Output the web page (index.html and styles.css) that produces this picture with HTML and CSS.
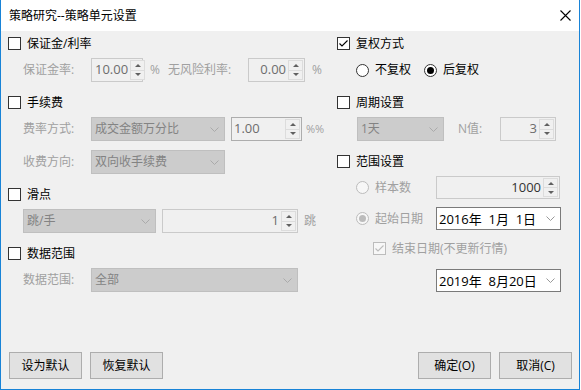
FILE: index.html
```html
<!DOCTYPE html>
<html lang="zh-CN">
<head>
    <meta charset="UTF-8">
    <title>策略研究--策略单元设置</title>
    <link rel="stylesheet" href="styles.css">
</head>
<body>
<div class="window">
    <!-- Title bar -->
    <div class="titlebar">
        <span class="title">策略研究--策略单元设置</span>
        <svg class="close" width="11" height="11" viewBox="0 0 11 11">
            <path d="M0.5 0.5 L10.5 10.5 M10.5 0.5 L0.5 10.5" stroke="#000" stroke-width="1.1" fill="none"/>
        </svg>
    </div>

    <div class="content">
        <div class="columns">
            <!-- Left column -->
            <div class="col col-left">
                <div class="group-head first"><span class="cb"></span>保证金/利率</div>
                <div class="row">
                    <span class="field-label">保证金率:</span>
                    <div class="spin w52"><span class="val">10.00</span><span class="arrows"><i class="up"></i><i class="down"></i></span></div>
                    <span class="unit">%</span>
                    <span class="field-label w80">无风险利率:</span>
                    <div class="spin w57"><span class="val">0.00</span><span class="arrows"><i class="up"></i><i class="down"></i></span></div>
                    <span class="unit">%</span>
                </div>

                <div class="group-head"><span class="cb"></span>手续费</div>
                <div class="row">
                    <span class="field-label">费率方式:</span>
                    <div class="combo w134"><span>成交金额万分比</span><svg class="chev" width="9" height="5" viewBox="0 0 9 5"><path d="M0.5 0.5 L4.5 4.5 L8.5 0.5" stroke="#aaa" fill="none"/></svg></div>
                    <div class="spin w71 dark-border gap6"><span class="val left">1.00</span><span class="arrows"><i class="up"></i><i class="down"></i></span></div>
                    <span class="unit small">%%</span>
                </div>
                <div class="row gap9">
                    <span class="field-label">收费方向:</span>
                    <div class="combo w134"><span>双向收手续费</span><svg class="chev" width="9" height="5" viewBox="0 0 9 5"><path d="M0.5 0.5 L4.5 4.5 L8.5 0.5" stroke="#aaa" fill="none"/></svg></div>
                </div>

                <div class="group-head"><span class="cb"></span>滑点</div>
                <div class="row">
                    <div class="combo w133 indent"><span>跳/手</span><svg class="chev" width="9" height="5" viewBox="0 0 9 5"><path d="M0.5 0.5 L4.5 4.5 L8.5 0.5" stroke="#aaa" fill="none"/></svg></div>
                    <div class="spin w136 gap6"><span class="val">1</span><span class="arrows"><i class="up"></i><i class="down"></i></span></div>
                    <span class="unit tick">跳</span>
                </div>

                <div class="group-head"><span class="cb"></span>数据范围</div>
                <div class="row">
                    <span class="field-label">数据范围:</span>
                    <div class="combo w207"><span>全部</span><svg class="chev" width="9" height="5" viewBox="0 0 9 5"><path d="M0.5 0.5 L4.5 4.5 L8.5 0.5" stroke="#aaa" fill="none"/></svg></div>
                </div>
            </div>

            <!-- Right column -->
            <div class="col col-right">
                <div class="group-head first">
                    <span class="cb"><svg width="11" height="11" viewBox="0 0 11 11"><path d="M1.5 5.5 L4 8 L9.5 2.5" stroke="#000" stroke-width="1.1" fill="none"/></svg></span>复权方式
                </div>
                <div class="row">
                    <span class="radio indent-r"></span><span class="radio-label">不复权</span>
                    <span class="radio on second"></span><span class="radio-label">后复权</span>
                </div>

                <div class="group-head"><span class="cb"></span>周期设置</div>
                <div class="row">
                    <div class="combo w87 indent-c"><span>1天</span><svg class="chev" width="9" height="5" viewBox="0 0 9 5"><path d="M0.5 0.5 L4.5 4.5 L8.5 0.5" stroke="#aaa" fill="none"/></svg></div>
                    <span class="field-label n-label">N值:</span>
                    <div class="spin w56"><span class="val">3</span><span class="arrows"><i class="up"></i><i class="down"></i></span></div>
                </div>

                <div class="group-head"><span class="cb"></span>范围设置</div>
                <div class="row h23">
                    <span class="radio off indent-r"></span><span class="radio-label dim w61">样本数</span>
                    <div class="spin w124 h23"><span class="val black">1000</span><span class="arrows"><i class="up"></i><i class="down"></i></span></div>
                </div>
                <div class="row h23">
                    <span class="radio off on indent-r"></span><span class="radio-label dim w61">起始日期</span>
                    <div class="date"><span class="date-text">2016年  1月  1日</span><svg class="chev" width="9" height="5" viewBox="0 0 9 5"><path d="M0.5 0.5 L4.5 4.5 L8.5 0.5" stroke="#999" fill="none"/></svg></div>
                </div>
                <div class="row end-row">
                    <span class="cb off"><svg width="11" height="11" viewBox="0 0 11 11"><path d="M1.5 5.5 L4 8 L9.5 2.5" stroke="#bcbcbc" stroke-width="1.1" fill="none"/></svg></span>
                    <span class="dim">结束日期(不更新行情)</span>
                </div>
                <div class="row h23 date-row">
                    <div class="date"><span class="date-text">2019年  8月20日</span><svg class="chev" width="9" height="5" viewBox="0 0 9 5"><path d="M0.5 0.5 L4.5 4.5 L8.5 0.5" stroke="#999" fill="none"/></svg></div>
                </div>
            </div>
        </div>

        <!-- Buttons -->
        <div class="footer">
            <div class="btn-group">
                <div class="btn">设为默认</div>
                <div class="btn">恢复默认</div>
            </div>
            <div class="btn-group">
                <div class="btn">确定(O)</div>
                <div class="btn">取消(C)</div>
            </div>
        </div>
    </div>
</div>
</body>
</html>
```

FILE: styles.css
```css
* {
    box-sizing: border-box;
}
body {
    margin: 0;
    background: #fff;
    font-family: "Open Sans", "Noto Sans CJK SC", sans-serif;
    font-size: 12px;
    line-height: 16px;
    color: #000;
}
/* Window frame */
.window {
    width: 580px;
    height: 390px;
    border: 1px solid #1883d7;
    border-top: 0;
    display: flex;
    flex-direction: column;
}
.titlebar {
    height: 31px;
    flex: none;
    background: #fff;
    display: flex;
    align-items: center;
    justify-content: space-between;
    padding: 0 8px 0 8px;
}
.content {
    flex: 1;
    background: #f0f0f0;
    display: flex;
    flex-direction: column;
}
.columns {
    display: flex;
    padding: 6px 0 0 7px;
}
.col-left {
    width: 329px;
}
.col-right {
    flex: 1;
}
/* Group headers */
.group-head {
    display: flex;
    align-items: center;
    height: 13px;
    margin-top: 14px;
}
.group-head.first {
    margin-top: 0;
}
.cb {
    width: 13px;
    height: 13px;
    border: 1px solid #333;
    background: #fff;
    margin-right: 6px;
    flex: none;
    display: flex;
}
.cb.off {
    border-color: #bcbcbc;
    background: #f7f7f7;
}
/* Rows */
.row {
    display: flex;
    align-items: center;
    height: 24px;
    margin-top: 8px;
}
.row.gap9 {
    margin-top: 9px;
}
.row.h23 {
    height: 23px;
}
.end-row {
    height: 13px;
    margin-top: 12px;
    padding-left: 36px;
}
.date-row {
    margin-top: 14px;
    padding-left: 99px;
}
.field-label {
    width: 68px;
    margin-left: 15px;
    color: #a0a0a0;
    flex: none;
}
.field-label.w80 {
    width: 80px;
    margin-left: 0;
}
.n-label {
    width: 42px;
    margin-left: 14px;
}
.unit {
    color: #a0a0a0;
    margin-left: 7px;
    width: 18px;
    flex: none;
}
.unit.small {
    margin-left: 4px;
    font-size: 11px;
}
.unit.tick {
    margin-left: 6px;
}
.dim {
    color: #a0a0a0;
}
/* Combo boxes */
.combo {
    display: flex;
    align-items: center;
    justify-content: space-between;
    height: 24px;
    flex: none;
    border: 1px solid #bfbfbf;
    background: #cccccc;
    color: #838383;
    padding: 0 5px 0 3px;
}
.combo.indent {
    margin-left: 15px;
}
.combo.indent-c {
    margin-left: 20px;
}
.w87 { width: 87px; }
.w133 { width: 133px; }
.w134 { width: 134px; }
.w207 { width: 207px; }
.w52 { width: 52px; }
.w56 { width: 56px; }
.w57 { width: 57px; }
.w61 { width: 61px; }
.w71 { width: 71px; }
.w124 { width: 124px; }
.w136 { width: 136px; }
.chev {
    flex: none;
}
/* Spin boxes */
.spin {
    display: flex;
    height: 24px;
    flex: none;
    border: 1px solid #cacaca;
    background: #f0f0f0;
    padding: 1px;
}
.spin.h23 {
    height: 23px;
}
.spin.gap6 {
    margin-left: 6px;
}
.spin.dark-border {
    border-color: #adadad;
}
.spin .val {
    flex: 1;
    text-align: right;
    padding: 0 2px;
    color: #6d6d6d;
    font-size: 13px;
    line-height: 18px;
}
.spin .val.left {
    text-align: left;
    padding-left: 1px;
}
.spin .val.black {
    color: #333;
}
.arrows {
    width: 15px;
    flex: none;
    display: flex;
    flex-direction: column;
}
.arrows i {
    flex: 1;
    display: flex;
    align-items: center;
    justify-content: center;
    border: 1px solid #dcdcdc;
    background: #f0f0f0;
}
.arrows i.down {
    border-top: 0;
}
.arrows i::after {
    content: "";
    width: 0;
    height: 0;
    border-left: 3px solid transparent;
    border-right: 3px solid transparent;
}
.arrows i.up::after {
    border-bottom: 3px solid #606060;
}
.arrows i.down::after {
    border-top: 3px solid #606060;
}
/* Radio buttons */
.radio {
    width: 13px;
    height: 13px;
    flex: none;
    border: 1px solid #333;
    border-radius: 50%;
    background: #fff;
    display: flex;
    align-items: center;
    justify-content: center;
}
.radio.on::after {
    content: "";
    width: 7px;
    height: 7px;
    border-radius: 50%;
    background: #000;
}
.radio.off {
    border-color: #bcbcbc;
    background: #f7f7f7;
}
.radio.off.on::after {
    background: #bcbcbc;
}
.radio.indent-r {
    margin-left: 19px;
}
.radio.second {
    margin-left: 13px;
}
.radio-label {
    margin-left: 6px;
}
/* Date pickers */
.date {
    width: 125px;
    height: 23px;
    flex: none;
    display: flex;
    align-items: center;
    justify-content: space-between;
    background: #fff;
    border: 1px solid #7a7a7a;
    padding: 0 5px 0 2px;
}
.date-text {
    white-space: pre;
    font-size: 13px;
}
/* Footer buttons */
.footer {
    margin-top: auto;
    display: flex;
    justify-content: space-between;
    padding: 0 7px 10px 8px;
}
.btn-group {
    display: flex;
    gap: 8px;
}
.btn {
    width: 73px;
    height: 27px;
    border: 1px solid #adadad;
    background: #e1e1e1;
    display: flex;
    align-items: center;
    justify-content: center;
}
```
